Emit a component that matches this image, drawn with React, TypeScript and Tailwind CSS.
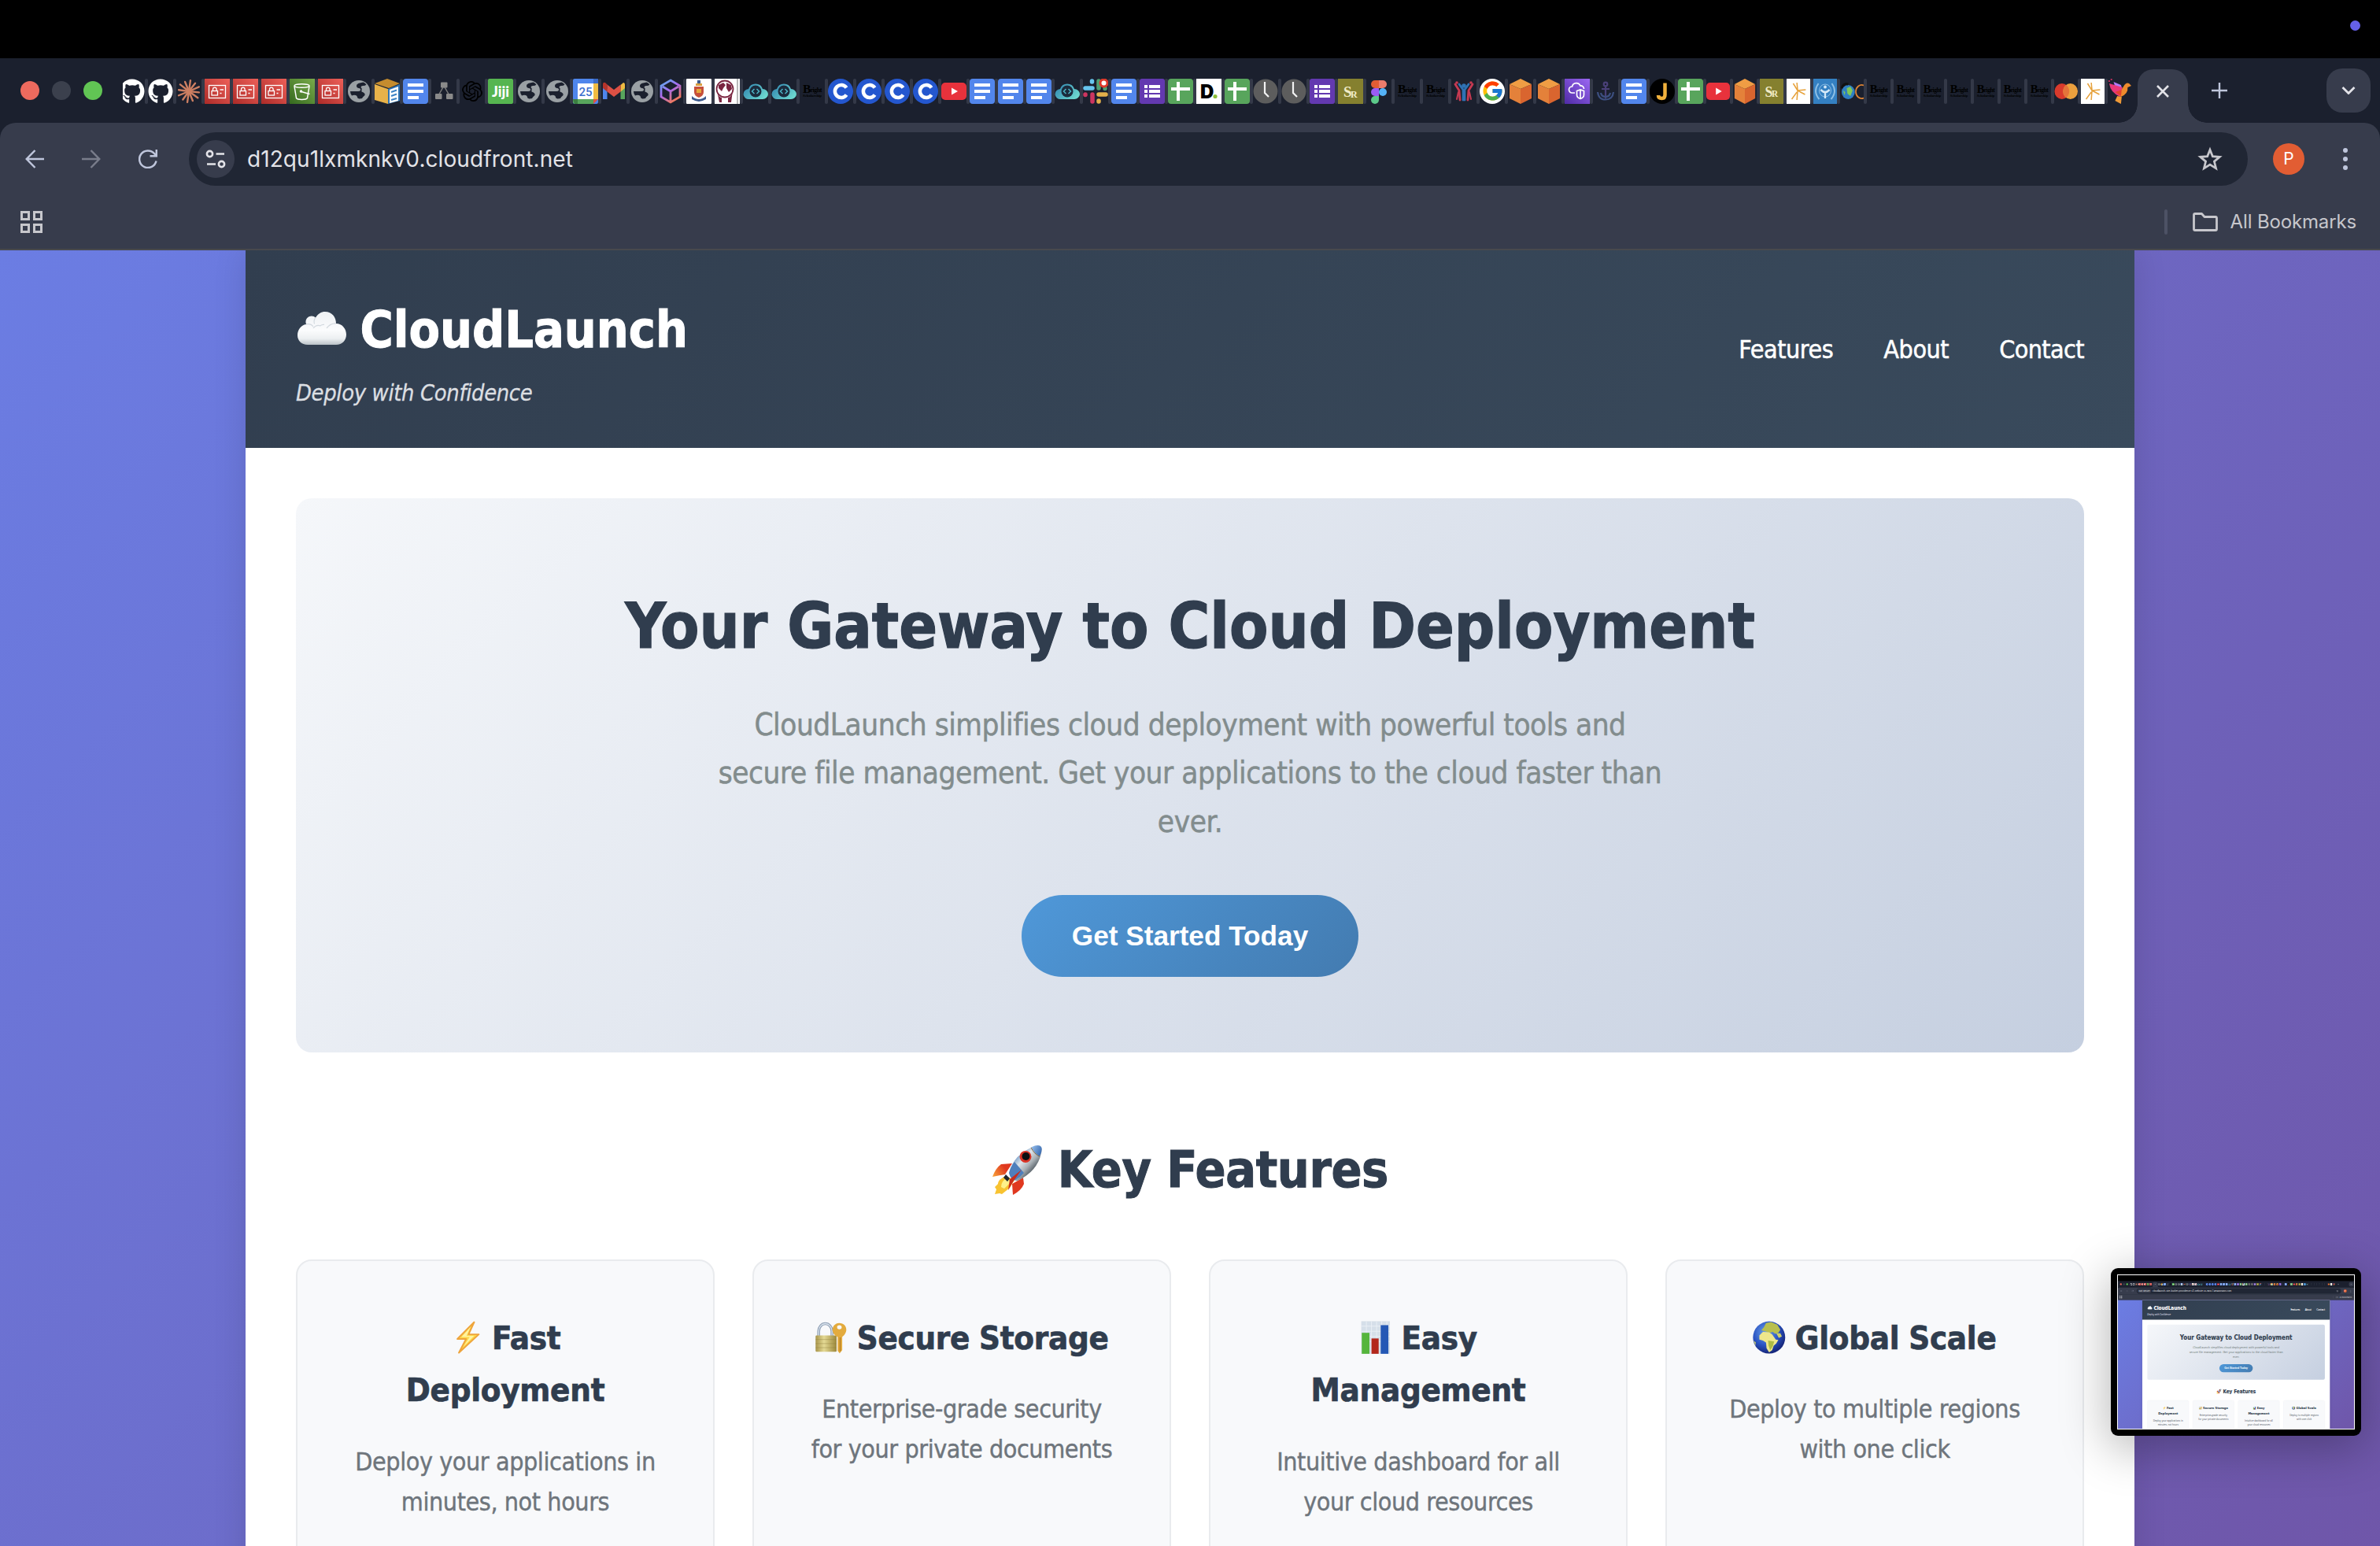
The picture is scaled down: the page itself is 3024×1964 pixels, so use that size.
import type { ReactNode } from 'react'
import { FaGithub } from 'react-icons/fa'
import { FcGoogle } from 'react-icons/fc'
import { SiOpenai } from 'react-icons/si'

/* ---------- favicons (32 x 32 drawings) ---------- */

const Fav = ({ children }: { children?: ReactNode }) => (
  <svg viewBox="0 0 32 32" preserveAspectRatio="none" className="block h-8 w-full">
    {children}
  </svg>
)

const Blank = () => <Fav />
const GitHub = () => <FaGithub className="block h-8 w-8 shrink-0 text-white" />
const Google = () => (
  <div className="flex h-8 w-8 items-center justify-center rounded-full bg-white">
    <FcGoogle className="h-[29px] w-[29px]" />
  </div>
)
const OpenAI = () => <SiOpenai className="block h-8 w-8 p-[3px] text-black" />

const rays = [0, 30, 58, 88, 118, 150, 180, 208, 240, 270, 300, 330]
const Claude = () => (
  <Fav>
    <g stroke="#cd7f62" strokeWidth="2.4" strokeLinecap="round">
      {rays.map((a, i) => (
        <line key={a} x1="16" y1="16" x2="16" y2={i % 2 ? 3 : 2} transform={`rotate(${a + 8} 16 16)`} />
      ))}
    </g>
  </Fav>
)

const RedId = () => (
  <Fav>
    <defs>
      <linearGradient id="redId" x1="0" y1="1" x2="1" y2="0">
        <stop offset="0" stopColor="#ac2b28" />
        <stop offset="1" stopColor="#ed5f58" />
      </linearGradient>
    </defs>
    <rect width="32" height="32" fill="url(#redId)" />
    <g fill="none" stroke="#fff" strokeWidth="1.3">
      <rect x="5.5" y="8.5" width="21" height="16" />
      <rect x="9" y="15.5" width="7.5" height="5.5" />
      <path d="M10.5 15.500V13.500a2.300 2.300 0 0 1 4.600 0V15.500M19.500 14h4.500M19.500 18.500h2" />
    </g>
  </Fav>
)

const Bucket = () => (
  <Fav>
    <defs>
      <linearGradient id="bucket" x1="0" y1="1" x2="1" y2="0">
        <stop offset="0" stopColor="#35691f" />
        <stop offset="1" stopColor="#79ab4a" />
      </linearGradient>
    </defs>
    <rect width="32" height="32" fill="url(#bucket)" />
    <g fill="none" stroke="#fff" strokeWidth="1.5">
      <ellipse cx="15.500" cy="9" rx="9.500" ry="2.300" />
      <path d="M6 9.500L8.500 24.500C10 27 21 27 22.500 24.500L25 9.500M15 16.500L25.500 19.500" />
      <circle cx="14.500" cy="16" r="1" />
    </g>
  </Fav>
)

const Globe = () => (
  <Fav>
    <circle cx="16" cy="16" r="14" fill="#9aa0a4" />
    <path d="M17 5.500q-4 1-4 3.500 0 2.500 3 3 2.500.5 2 2.500-.5 1.500-3 1.500H5q0 3 2 5.500 2-1 5-.5 2 .5 2 2.500 0 1.500 2.500 2l3.500-.5q1-2 2.500-3 2-1.500.5-3.500-1.500-1.500-3.500-2v-2.500q1-1.500-1-3 0-2 2.500-2 3 0 4.500-1.500-2-2.500-4-3-2 .5-4.500 1z" fill="#1b202e" />
  </Fav>
)

const AwsBox = () => (
  <Fav>
    <path d="M0 6L16 0l16 6-14 6z" fill="#c58c2e" />
    <path d="M0 7l17 6v19L0 27z" fill="#e8b24a" />
    <path d="M17 13l15-6v21l-15 4z" fill="#2f74b5" />
    <path d="M19 14l11-4v18l-11 3z" fill="#fff" />
    <path d="M21 17l7-2.500M21 22l7-2.500M21 27l7-2" stroke="#3b82c4" strokeWidth="2.200" />
  </Fav>
)

const Doc = () => (
  <Fav>
    <rect width="32" height="32" rx="4" fill="#5286ec" />
    <path d="M6 8h20M6 16h20M6 24h14" stroke="#fff" strokeWidth="4" />
  </Fav>
)

const Nodes = () => (
  <Fav>
    <path d="M16 9L8 23M16 9l8 14" stroke="#7d7d7d" strokeWidth="1.500" />
    <g fill="#8a8a8a">
      <rect x="12" y="4.500" width="8.500" height="7" rx="1" />
      <rect x="5" y="19" width="8.500" height="7" rx="1" />
      <rect x="19" y="19" width="8.500" height="7" rx="1" />
    </g>
  </Fav>
)

const Jiji = () => (
  <Fav>
    <rect width="32" height="32" rx="2" fill="#56b550" />
    <text x="16" y="22.500" textAnchor="middle" fontFamily="Lato" fontWeight="900" fontSize="18" fill="#fff" textLength="22" lengthAdjust="spacingAndGlyphs">Jiji</text>
  </Fav>
)

const Calendar = () => (
  <Fav>
    <rect width="32" height="32" rx="2" fill="#4f86ec" />
    <path d="M26 6h6v20h-6z" fill="#f0bc42" />
    <path d="M0 26h26v6H3q-3 0-3-3z" fill="#58a55c" />
    <path d="M26 0h6v6h-6z" fill="#3a6ac6" />
    <path d="M0 26h6v6H2z" fill="#3b7f42" />
    <path d="M26 26h6l-6 6z" fill="#e25142" />
    <rect x="6" y="6" width="20" height="20" fill="#fff" />
    <text x="16" y="21.500" textAnchor="middle" fontFamily="Roboto" fontWeight="500" fontSize="15" fill="#3c6fcf">25</text>
  </Fav>
)

const Gmail = () => (
  <Fav>
    <path d="M2 9v17h5.500V13z" fill="#4f86ec" />
    <path d="M30 9v17h-5.500V13z" fill="#58a55c" />
    <path d="M24.500 8L28 5q2 0 2 3v4l-5.500 4.500z" fill="#f0bc42" />
    <path d="M2 7q0-3 3-2l2.500 2.500v9L2 12z" fill="#b5342b" />
    <path d="M7.500 7.500L16 14l8.500-6.500v9L16 23l-8.500-6.500z" fill="#dc5044" />
  </Fav>
)

const HexCube = () => (
  <Fav>
    <defs>
      <linearGradient id="hex" x1="0" y1="0" x2="0.600" y2="1">
        <stop offset="0" stopColor="#55b7f0" />
        <stop offset="0.500" stopColor="#a66bf0" />
        <stop offset="1" stopColor="#f0795e" />
      </linearGradient>
    </defs>
    <path d="M16 2l12 7v14l-12 7-12-7V9zM16 16v13M16 16L6 10M16 16l10-6" fill="none" stroke="url(#hex)" strokeWidth="2.800" />
  </Fav>
)

const Crest = () => (
  <Fav>
    <rect width="32" height="32" rx="1" fill="#fff" />
    <path d="M14 2h4v6h-4z" fill="#3c5a8e" />
    <path d="M12 6h8v3h-8z" fill="#d9a040" />
    <path d="M10 10h12v7q0 5-6 7-6-2-6-7z" fill="#c6503b" />
    <path d="M13 13h6v5h-6z" fill="#e5a83c" />
    <path d="M7 22q4 4 9 4t9-4v4q-5 3-9 3t-9-3z" fill="#3c5a8e" />
  </Fav>
)

const MaroonGlobe = () => (
  <Fav>
    <rect width="32" height="32" fill="#fff" />
    <circle cx="13" cy="13" r="10.500" fill="none" stroke="#7a2540" strokeWidth="1.800" />
    <path d="M5 8l6-3 3 3-3 4-2 4-4-4zM15 5l6 3 1 5-4 4-3-5zM3 15q2 9 6 9v6H6zM23 15q-2 9-6 9v6h4z" fill="#7a2540" />
    <path d="M28.500 0h1v32h-1z" fill="#777" />
  </Fav>
)

const CloudCode = () => (
  <Fav>
    <defs>
      <linearGradient id="cloudCode" x1="0" y1="0" x2="1" y2="0.600">
        <stop offset="0" stopColor="#2c7fae" />
        <stop offset="1" stopColor="#6bd6cf" />
      </linearGradient>
    </defs>
    <path d="M8 26a7 6.500 0 0 1-1-13 9.500 9.500 0 0 1 18 0A7 6.500 0 0 1 25 26z" fill="url(#cloudCode)" />
    <circle cx="16" cy="16" r="7.500" fill="#1b2a3c" />
    <path d="M14.500 13L11.500 16l3 3M17.500 13l3 3-3 3" fill="none" stroke="#4cb3c4" strokeWidth="1.500" />
  </Fav>
)

const Bright = () => (
  <Fav>
    <g fill="#000" fontFamily="Liberation Serif" fontWeight="700">
      <text x="4" y="18" fontSize="15.500">B</text>
      <text x="13.500" y="17" fontSize="8" textLength="15">right</text>
      <text x="4" y="23.300" fontSize="5" textLength="24" lengthAdjust="spacingAndGlyphs">Scholarship</text>
    </g>
  </Fav>
)

const CircleC = () => (
  <Fav>
    <circle cx="16" cy="16" r="16" fill="#2457cf" />
    <path d="M23.500 11.500A8 8 0 1 0 23.500 20.500" fill="none" stroke="#fff" strokeWidth="4.500" />
  </Fav>
)

const YouTube = () => (
  <Fav>
    <rect y="5" width="32" height="22" rx="5" fill="#e8323c" />
    <path d="M13 11.500v9l8-4.500z" fill="#fff" />
  </Fav>
)

const Slack = () => (
  <Fav>
    <g strokeWidth="5.500" strokeLinecap="round">
      <path d="M3 12h9" stroke="#67c5ee" />
      <path d="M11.500 3v1" stroke="#67c5ee" />
      <path d="M20 3v9M28 12v.5" stroke="#4f9f72" />
      <path d="M20 20h9M20 28v1" stroke="#e3b04b" />
      <path d="M12 20v9M3 20v.5" stroke="#cd3560" />
    </g>
    <circle cx="26.500" cy="5.500" r="6" fill="#dd3a2b" />
    <circle cx="26.500" cy="5.500" r="3" fill="#fff" />
  </Fav>
)

const Forms = () => (
  <Fav>
    <rect width="32" height="32" rx="3" fill="#6339b0" />
    <path d="M6 10h4M12 10h14M6 16h4M12 16h14M6 22h4M12 22h14" stroke="#fff" strokeWidth="4" />
  </Fav>
)

const Sheet = () => (
  <Fav>
    <rect width="32" height="32" rx="4" fill="#58a55c" />
    <path d="M13 4v24M4 13h24" stroke="#fff" strokeWidth="4" />
  </Fav>
)

const LetterD = () => (
  <Fav>
    <rect width="32" height="32" fill="#fff" />
    <text x="5" y="25" fontFamily="Inter" fontWeight="900" fontSize="24" fill="#000">D</text>
    <circle cx="24" cy="22.500" r="2.600" fill="#8bbf3a" />
  </Fav>
)

const Clock = () => (
  <Fav>
    <circle cx="16" cy="16" r="15.500" fill="#5d5d5d" />
    <path d="M15 4v14l5 5" fill="none" stroke="#f2f2f2" strokeWidth="2.200" />
  </Fav>
)

const Sr = () => (
  <Fav>
    <rect width="32" height="32" fill="#85802f" />
    <text x="7" y="23" fontFamily="Liberation Serif" fontWeight="700" fontSize="19" fill="#f1ecc8">S</text>
    <text x="16" y="23.500" fontFamily="Liberation Serif" fontWeight="700" fontSize="12" fill="#f1ecc8">R</text>
  </Fav>
)

const Figma = () => (
  <Fav>
    <path d="M16 2H11a5 5 0 0 0 0 10h5z" fill="#e25d33" />
    <path d="M16 2h5a5 5 0 0 1 0 10h-5z" fill="#ec7c6c" />
    <path d="M16 12H11a5 5 0 0 0 0 10h5z" fill="#9a5cf5" />
    <circle cx="21" cy="17" r="5" fill="#54b2f7" />
    <path d="M16 22H11a5 5 0 1 0 5 5z" fill="#5cc98a" />
  </Fav>
)

const People = () => (
  <Fav>
    <g fill="none" strokeLinecap="round">
      <path d="M5 7l5 8 1 12M27 7l-5 8-1 12" stroke="#c83a52" strokeWidth="2.800" />
      <path d="M9 17l-2 9M23 17l2 9" stroke="#c83a52" strokeWidth="2" />
      <path d="M10 7l5 7v13M22 7l-5 7v13" stroke="#2f72b4" strokeWidth="2.800" />
    </g>
    <circle cx="16" cy="9" r="2.800" fill="#2f72b4" />
    <circle cx="7" cy="5" r="1.800" fill="#c83a52" />
    <circle cx="25" cy="5" r="1.800" fill="#c83a52" />
  </Fav>
)

const OrangeCube = () => (
  <Fav>
    <path d="M16 0l14 7-14 6L2 7z" fill="#ef9d44" />
    <path d="M2 7l14 6v19L2 25z" fill="#e4813a" />
    <path d="M30 7l-14 6v19l14-7z" fill="#d9652f" />
  </Fav>
)

const Vpc = () => (
  <Fav>
    <defs>
      <linearGradient id="vpc" x1="0" y1="1" x2="1" y2="0">
        <stop offset="0" stopColor="#4f2ba6" />
        <stop offset="1" stopColor="#9b67f2" />
      </linearGradient>
    </defs>
    <rect width="32" height="32" fill="url(#vpc)" />
    <g fill="none" stroke="#fff" strokeWidth="1.700">
      <path d="M13 18H9.500a4 4 0 0 1 0-8 5.500 5.500 0 0 1 10.500-1 4 4 0 0 1 4.500 4" />
      <path d="M15.500 15.500l4.500-1.500 4.500 1.500v5q0 3.500-4.500 5-4.500-1.500-4.500-5zM20 14v11" />
    </g>
  </Fav>
)

const Anchor = () => (
  <Fav>
    <g fill="none" stroke="#4a4078" strokeWidth="2.200">
      <circle cx="16" cy="7" r="2.300" />
      <path d="M16 9.500v16M11 13h10" />
      <path d="M6 17q1 9.500 10 9.500t10-9.500M10 18q1 5 6 5t6-5" stroke="#3c4f80" />
    </g>
  </Fav>
)

const LetterJ = () => (
  <Fav>
    <circle cx="16" cy="16" r="16" fill="#000" />
    <path d="M19.500 5.500v15q0 4.500-4 4.500-4.500 0-4.500-4" fill="none" stroke="#f0b03c" strokeWidth="4.500" />
  </Fav>
)

const Spark = () => (
  <Fav>
    <rect width="32" height="32" fill="#fff" />
    <path d="M15 15L9 6M15 15L14 5M15 15l11-1M15 15l10 5M15 15l-1 12M14 17l-7 9" fill="none" stroke="#e6a13a" strokeWidth="1.600" />
  </Fav>
)

const Emblem = () => (
  <Fav>
    <rect width="32" height="32" fill="#3480c2" />
    <g fill="none" stroke="#8fc0e6">
      <path d="M7 6Q-1 16 8 26M25 6q8 10-1 20" strokeWidth="2" />
      <circle cx="16" cy="15" r="8" strokeWidth="1" />
      <path d="M10 14q6 6 12 0M16 17v8" stroke="#d4e8f7" strokeWidth="2.500" />
    </g>
    <circle cx="16" cy="10.500" r="2" fill="#cfe6f7" />
  </Fav>
)

const EarthC = () => (
  <Fav>
    <circle cx="11" cy="17" r="9" fill="#2f7fc4" />
    <path d="M9 12l5-2 3 5-3 7-4-3zM4 15l3 2-1 4z" fill="#7fc85b" />
    <path d="M2 12Q5 5 11 7" stroke="#111" strokeWidth="3" fill="none" />
    <path d="M32 8.500a8 8.500 0 1 0 0 16" fill="none" stroke="#dd8434" strokeWidth="1.800" />
  </Fav>
)

const MasterCard = () => (
  <Fav>
    <circle cx="10.500" cy="16" r="10" fill="#d93a2c" />
    <circle cx="22" cy="16" r="10" fill="#eba03e" />
    <path d="M16.200 7.800a10 10 0 0 1 0 16.400 10 10 0 0 1 0-16.400z" fill="#e5743a" />
  </Fav>
)

const Bird = () => (
  <Fav>
    <path d="M8 4l10 4 2 6-10-4z" fill="#b07bf5" />
    <path d="M2 6l18 5-3 12Q4 18 2 6z" fill="#e8397a" />
    <path d="M15 20L22 9q3-5 7-3l3 3-5 2q1 8-9 12z" fill="#ee8b2d" />
    <path d="M10 17l9-3-1 8z" fill="#e2432f" />
    <path d="M13 22l6 1-1 9-8-4z" fill="#ef9a37" />
    <path d="M1 2h2v2H1zM4 0h2v2H4z" fill="#c22f5e" />
  </Fav>
)

const leadingTabs = [GitHub, Claude, RedId, RedId, RedId, Bucket, RedId]
const middleTabs = [
  Globe, AwsBox, Doc, Nodes, OpenAI, Jiji, Globe, Globe, Calendar, Gmail, Globe, HexCube, Crest,
  MaroonGlobe, CloudCode, CloudCode, Bright, CircleC, CircleC, CircleC, CircleC, YouTube, Doc, Doc,
  Doc, CloudCode, Slack, Doc, Forms, Sheet, LetterD, Sheet, Clock, Clock, Forms, Sr, Figma, Bright,
  Bright, People, Google, OrangeCube, OrangeCube, Vpc, Anchor, Doc, LetterJ, Sheet,
]
const narrowTabs = [
  YouTube, OrangeCube, Sr, Spark, Emblem, EarthC, Bright, Bright, Bright, Bright, Bright, Bright,
  Bright, MasterCard, Spark, Bird,
]

/* ---------- browser window ---------- */

const Separator = () => <div className="h-8 w-1 shrink-0 rounded-sm bg-[#343948]" />

const Tab = ({ icon: Icon, narrow = false }: { icon: () => ReactNode; narrow?: boolean }) => (
  <div className="flex shrink-0">
    <Separator />
    <div className={narrow ? 'w-[30px] overflow-hidden' : 'w-8'}>
      <Icon />
    </div>
  </div>
)

const ActiveTab = () => (
  <div className="relative ml-2 flex h-[68px] w-16 shrink-0 items-center justify-center self-end rounded-t-[20px] bg-[#373c4c] pb-3">
    <div className="absolute bottom-0 -left-6 h-6 w-6 bg-[radial-gradient(circle_at_0_0,transparent_23.5px,#373c4c_24px)]" />
    <div className="absolute -right-6 bottom-0 h-6 w-6 bg-[radial-gradient(circle_at_100%_0,transparent_23.5px,#373c4c_24px)]" />
    <svg viewBox="0 0 16 16" className="h-4 w-4" stroke="#e3e3e8" strokeWidth="2.600">
      <path d="M1 1l14 14M15 1L1 15" />
    </svg>
  </div>
)

const TabStrip = ({ mini }: { mini: boolean }) => (
  <div className="flex h-[82px] shrink-0 items-center bg-[#1b202e]">
    <div className="flex shrink-0 gap-4 pl-[26px]">
      <div className="h-6 w-6 rounded-full bg-[#ed6a5e]" />
      <div className="h-6 w-6 rounded-full bg-[#3b404d]" />
      <div className="h-6 w-6 rounded-full bg-[#61c554]" />
    </div>
    <div className="ml-[26px] flex h-full items-center pt-px">
      <div className="flex w-7 justify-end overflow-hidden">
        <GitHub />
      </div>
      {leadingTabs.map((icon, i) => (
        <Tab key={i} icon={icon} />
      ))}
      {mini && <ActiveTab />}
      {middleTabs.map((icon, i) => (
        <Tab key={i} icon={mini && icon === Bright ? Blank : icon} />
      ))}
      {narrowTabs.map((icon, i) => (
        <Tab key={i} icon={mini && icon === Bright ? Blank : icon} narrow />
      ))}
      {!mini && <ActiveTab />}
    </div>
    <svg viewBox="0 0 20 20" className="ml-[30px] h-5 w-5 shrink-0" stroke="#bfc6dc" strokeWidth="2.400">
      <path d="M10 0v20M0 10h20" />
    </svg>
    <div className="mr-3 ml-auto flex h-14 w-14 shrink-0 items-center justify-center rounded-[20px] bg-[#373c4c]">
      <svg viewBox="0 0 18 10" className="h-[10px] w-[18px]" fill="none" stroke="#e3e3e8" strokeWidth="2.800">
        <path d="M1.500 1L9 8.500 16.500 1" />
      </svg>
    </div>
  </div>
)

const Toolbar = ({ mini }: { mini: boolean }) => (
  <div className="shrink-0 bg-[#1b202e]">
    <div className="flex h-[92px] items-center rounded-t-[20px] bg-[#373c4c] pl-8">
      <svg viewBox="0 0 24 24" className="h-6 w-6" fill="none" stroke="#bfc6dc" strokeWidth="2.500">
        <path d="M12.500 1L1.800 12l10.700 11M2 12h22" />
      </svg>
      <svg viewBox="0 0 24 24" className="ml-12 h-6 w-6" fill="none" stroke="#797d8b" strokeWidth="2.500">
        <path d="M11.500 1l10.700 11-10.700 11M22 12H0" />
      </svg>
      <svg viewBox="0 0 24 24" className="ml-12 h-6 w-6" fill="none" stroke="#bfc6dc" strokeWidth="2.500">
        <path d="M22.500 14.500A10.800 10.800 0 1 1 20 5l2 2.500M22.800 0v8.300H14.500" />
      </svg>
      <div className="ml-10 flex h-[68px] w-[2616px] items-center rounded-full bg-[#202634] pr-8 pl-[10px]">
        {mini ? (
          <div className="flex h-12 items-center rounded-full bg-[#373c4c] px-5 font-['Inter'] text-[26px] text-[#e3e3e8]">Not Secure</div>
        ) : (
          <div className="flex h-12 w-12 items-center justify-center rounded-full bg-[#373c4c]">
            <svg viewBox="0 0 26 26" className="h-[26px] w-[26px]" fill="none" stroke="#e3e3e8" strokeWidth="2.600">
              <circle cx="5.500" cy="6.500" r="3.600" />
              <circle cx="20.500" cy="19.500" r="3.600" />
              <path d="M13.500 6.500H24M2 19.500h11" />
            </svg>
          </div>
        )}
        <div className="ml-4 font-['Inter'] text-[28px] leading-none tracking-[0.08px] text-[#e3e3e8]">
          {mini ? 'cloudlaunch-site-bucket-providence.s3-website.us-east-1.amazonaws.com' : 'd12qu1lxmknkv0.cloudfront.net'}
        </div>
        <svg viewBox="0 0 32 32" className="ml-auto h-8 w-8" fill="none" stroke="#c7c7cc" strokeWidth="2.700">
          <path d="M16 4.200l3.300 8.400 9 .7-6.900 5.800 2.200 8.800L16 23.100l-7.600 4.800 2.200-8.800-6.900-5.800 9-.7z" />
        </svg>
      </div>
      <div className="ml-8 flex h-10 w-10 items-center justify-center rounded-full bg-[#e25d33] font-['Inter'] text-[21px] text-white">P</div>
      <div className="ml-[49px] flex flex-col gap-[5px]">
        <div className="h-1.5 w-1.5 rounded-full bg-[#bfc6dc]" />
        <div className="h-1.5 w-1.5 rounded-full bg-[#bfc6dc]" />
        <div className="h-1.5 w-1.5 rounded-full bg-[#bfc6dc]" />
      </div>
    </div>
    <div className="flex h-[70px] items-center border-b-2 border-[#48494d] bg-[#373c4c] pr-[30px] pl-[26px]">
      <div className="grid grid-cols-2 gap-1">
        <div className="h-3 w-3 border-[3px] border-[#c7c7cc]" />
        <div className="h-3 w-3 border-[3px] border-[#c7c7cc]" />
        <div className="h-3 w-3 border-[3px] border-[#c7c7cc]" />
        <div className="h-3 w-3 border-[3px] border-[#c7c7cc]" />
      </div>
      <div className="ml-auto h-8 w-1 rounded-full bg-[#4d5265]" />
      <svg viewBox="0 0 32 24" className="ml-8 h-6 w-8" fill="none" stroke="#c7c7cc" strokeWidth="2.800" strokeLinejoin="round">
        <path d="M1.500 3q0-1.500 1.500-1.500h8.500L15 5.500h14q1.500 0 1.500 1.500v14q0 1.500-1.500 1.500H3q-1.500 0-1.500-1.500z" />
      </svg>
      <div className="ml-4 font-['Inter'] text-[24px] leading-none tracking-[-0.15px] text-[#c7c7cc]">All Bookmarks</div>
    </div>
  </div>
)

/* ---------- emoji drawings ---------- */

const Emoji = ({ label, children }: { label: string; children: ReactNode }) => (
  <svg viewBox="0 0 64 64" role="img" aria-label={label} className="inline-block h-[1em] w-[1em] align-[-0.15em]">
    {children}
  </svg>
)

const CloudEmoji = () => (
  <Emoji label="cloud">
    <defs>
      <linearGradient id="cloudFill" x1="0" y1="9" x2="0" y2="52" gradientUnits="userSpaceOnUse">
        <stop offset="0" stopColor="#eef1f4" />
        <stop offset="0.550" stopColor="#fbfcfd" />
        <stop offset="0.800" stopColor="#eceff1" />
        <stop offset="1" stopColor="#b4bcc2" />
      </linearGradient>
    </defs>
    <path d="M15 51C7 51 2 45.500 2 39S6 26 13 25C11 19 15 14.500 20 14.500q3 0 5 2c3-5 7-7.500 12-7.500 9 0 14 7 14 15 8 0 13 7 13 14 0 7-5 13-13 13z" fill="url(#cloudFill)" />
    <g fill="none" stroke="#d3d9df" strokeWidth="1.200">
      <path d="M25 16.500q-3 4-1.500 8" />
      <path d="M13 25q6-1 9 3M51 24q-7-.5-12 6" />
      <path d="M22 30q4-5 9-3 2-2 5-1.500" />
    </g>
  </Emoji>
)

const RocketEmoji = () => (
  <Emoji label="rocket">
    <defs>
      <linearGradient id="hull" x1="26" y1="18" x2="50" y2="40" gradientUnits="userSpaceOnUse">
        <stop offset="0" stopColor="#5f8fc4" />
        <stop offset="0.350" stopColor="#dfe5ea" />
        <stop offset="0.650" stopColor="#a9b0b5" />
        <stop offset="1" stopColor="#3c464e" />
      </linearGradient>
      <linearGradient id="nose" x1="50" y1="2" x2="66" y2="10" gradientUnits="userSpaceOnUse">
        <stop offset="0" stopColor="#9cc4ef" />
        <stop offset="1" stopColor="#2b5ea8" />
      </linearGradient>
      <linearGradient id="fin" x1="24" y1="26" x2="2" y2="42" gradientUnits="userSpaceOnUse">
        <stop offset="0.300" stopColor="#e0381f" />
        <stop offset="1" stopColor="#f9a63a" />
      </linearGradient>
    </defs>
    <path d="M26 24L12 25Q5 30 1 41l16-3z" fill="url(#fin)" />
    <path d="M40 42l1 8Q38 58 27 64l-1-14z" fill="#e0381f" />
    <path d="M18 40Q8 44 8 50L4 54l2 3-2 6 6-1 3 1 10-8 6-10z" fill="#f8c331" />
    <path d="M20 42q-8 4-8 12l4 2 8-8z" fill="#fdf08a" />
    <path d="M22 36Q28 12 55 2q11-3 8 9Q58 34 33 46q-8 1-11-10z" fill="url(#hull)" />
    <path d="M22 36q2-8 7-14l12 14q-5 6-11 9-6 0-8-9z" fill="#4f7fbc" />
    <path d="M50 3.500Q60-1 63 3q2 4-2 12-6-3-11-11.500z" fill="url(#nose)" />
    <path d="M50 4q4 8 11 11.500" fill="none" stroke="#8c6d45" strokeWidth="1" />
    <circle cx="43" cy="15.500" r="7.500" fill="#d93325" />
    <circle cx="43.500" cy="15" r="5" fill="#0c0f12" />
    <path d="M38 32l-10 14-7 12 2-14z" fill="#c92c1b" />
    <path d="M18 38l5 5-3 4-5-5z" fill="#20262c" />
  </Emoji>
)

const BoltEmoji = () => (
  <Emoji label="high voltage">
    <path d="M47 2L14 35h17L17 62 56 26H36z" fill="#fdd648" stroke="#eea43c" strokeWidth="3" strokeLinejoin="round" />
    <path d="M40 11L22 31h16L26 50 47 29H32z" fill="#fff3a0" />
  </Emoji>
)

const LockEmoji = () => (
  <Emoji label="locked with key">
    <defs>
      <linearGradient id="lockBody" x1="0" y1="0" x2="1" y2="0">
        <stop offset="0" stopColor="#a8954a" />
        <stop offset="0.400" stopColor="#e4d994" />
        <stop offset="1" stopColor="#9b873a" />
      </linearGradient>
    </defs>
    <path d="M8 30V20a13 15 0 0 1 26 0v10" fill="none" stroke="#8fa0b5" strokeWidth="5.500" />
    <path d="M8 30V20a13 15 0 0 1 26 0v10" fill="none" stroke="#dbe4ee" strokeWidth="2" />
    <rect x="2" y="28" width="41" height="32" rx="2" fill="url(#lockBody)" />
    <path d="M2 36h41M2 44h41M2 52h41" stroke="#8f8040" strokeWidth="1" opacity="0.600" />
    <path d="M48 4c9 0 14 6 14 13 0 6-4 11-8 14v26l-5 6-4-5V31c-6-3-10-8-10-14S40 4 48 4z" fill="#e3ab3e" />
    <ellipse cx="48.500" cy="12" rx="4.500" ry="4" fill="#f8f9fa" />
    <path d="M50 32v27" stroke="#b47c22" strokeWidth="2" />
  </Emoji>
)

const ChartEmoji = () => (
  <Emoji label="bar chart">
    <rect x="4" y="0" width="56" height="64" fill="#d5dfe9" />
    <path d="M4 10h56M4 20h56M4 30h56M4 40h56M14 0v64M24 0v64M34 0v64M44 0v64M54 0v64" stroke="#e9eff5" strokeWidth="1.500" />
    <rect x="5" y="23" width="15" height="41" fill="#55b53c" />
    <rect x="24" y="34" width="14" height="30" fill="#b3271c" />
    <rect x="42" y="8" width="15" height="56" fill="#2458b5" />
  </Emoji>
)

const EarthEmoji = () => (
  <Emoji label="globe">
    <defs>
      <radialGradient id="sea" cx="0.400" cy="0.350" r="0.650">
        <stop offset="0" stopColor="#6fa5e8" />
        <stop offset="0.600" stopColor="#2b55c4" />
        <stop offset="1" stopColor="#16277c" />
      </radialGradient>
    </defs>
    <circle cx="32" cy="32" r="31.500" fill="url(#sea)" />
    <path d="M17 18l5-6 4-8 10-2 12 5 6 10-4 6-6 2-5-4-6 2-8-3z" fill="#b8bf4e" />
    <path d="M13 28l7-7 12 1 6 4 7 10 5 1-4 7-5 4-3 9-6 4-5-8-1-11-6-4-7-2z" fill="#eee78b" />
    <path d="M30 38l12 2-3 10-5 7-3-9z" fill="#aebb45" />
    <path d="M46 24l8 0 3 6-6 3zM2 38l4 4-1 6z" fill="#cfd06a" />
  </Emoji>
)

/* ---------- site ---------- */

const cards = [
  { icon: <BoltEmoji />, title: ['Fast', 'Deployment'], text: ['Deploy your applications in', 'minutes, not hours'] },
  { icon: <LockEmoji />, title: ['Secure Storage'], text: ['Enterprise-grade security', 'for your private documents'] },
  { icon: <ChartEmoji />, title: ['Easy', 'Management'], text: ['Intuitive dashboard for all', 'your cloud resources'] },
  { icon: <EarthEmoji />, title: ['Global Scale'], text: ['Deploy to multiple regions', 'with one click'] },
]

const Site = () => (
  <div className="flex min-h-0 flex-1 justify-center overflow-hidden bg-[linear-gradient(135deg,#6b7de3_0%,#704e9d_100%)] bg-[length:100%_2640px] bg-no-repeat">
    <div className="h-[2400px] w-[2400px] bg-white font-['DejaVu_Sans_Condensed',sans-serif] shadow-[0_0_40px_rgba(0,0,0,0.12)]">
      <header className="flex h-[251px] items-center justify-between bg-[linear-gradient(135deg,#313e4f,#394a5c)] px-16 text-white">
        <div>
          <h1 className="translate-y-[0.03em] text-[64px] leading-[102.4px] font-bold whitespace-nowrap [-webkit-text-stroke:1px] [word-spacing:-2.5px]">
            <CloudEmoji /> CloudLaunch
          </h1>
          <p className="mt-[6.4px] translate-y-[0.03em] text-[28.8px] leading-[46px] tracking-[-0.34px] text-[#dcdfe2] italic [-webkit-text-stroke:0.3px]">Deploy with Confidence</p>
        </div>
        <nav className="flex translate-y-[1px] gap-16 text-[32px] leading-[51.2px] tracking-[-0.45px] [-webkit-text-stroke:0.5px]">
          <span>Features</span>
          <span>About</span>
          <span className="tracking-[-0.6px]">Contact</span>
        </nav>
      </header>
      <main className="p-16">
        <section className="flex flex-col items-center rounded-[20px] bg-[linear-gradient(135deg,#f5f7fa_0%,#c5cfe0_100%)] py-24 text-center">
          <h2 className="translate-y-[0.04em] text-[80px] leading-[128px] font-bold text-[#303d4e] [-webkit-text-stroke:1.2px]">Your Gateway to Cloud Deployment</h2>
          <p className="mt-8 translate-y-[0.02em] text-[38.4px] leading-[61.44px] tracking-[-0.46px] text-[#828c8d] [-webkit-text-stroke:0.5px]">
            CloudLaunch simplifies cloud deployment with powerful tools and
            <br />
            secure file management. Get your applications to the cloud faster than
            <br />
            ever.
          </p>
          <button className="mt-16 flex h-[104px] w-[428px] items-center justify-center rounded-full bg-[linear-gradient(135deg,#4f98d9,#437bb0)] font-['Liberation_Sans'] text-[35.2px] font-bold text-white">
            Get Started Today
          </button>
        </section>
        <section className="mt-24">
          <h2 className="translate-y-[0.03em] text-center text-[64px] leading-[102.4px] font-bold tracking-[-0.4px] text-[#303d4e] [-webkit-text-stroke:1px]">
            <RocketEmoji /> Key Features
          </h2>
          <div className="mt-16 grid grid-cols-4 gap-12">
            {cards.map((card) => (
              <article key={card.title.join()} className="h-[500px] rounded-[20px] border-2 border-[#e9ebee] bg-[#f8f9fb] pt-16 text-center">
                <h3 className="translate-y-[0.03em] text-[41.6px] leading-[66.56px] font-bold tracking-[-0.25px] text-[#303d4e] [-webkit-text-stroke:0.7px] [word-spacing:-1px]">
                  {card.icon} {card.title[0]}
                  {card.title[1] && <br />}
                  {card.title[1]}
                </h3>
                <p className="mt-8 translate-y-[0.04em] text-[32px] leading-[51.2px] tracking-[-0.43px] text-[#6e757c] [-webkit-text-stroke:0.4px]">
                  {card.text[0]}
                  <br />
                  {card.text[1]}
                </p>
              </article>
            ))}
          </div>
        </section>
      </main>
    </div>
  </div>
)

const Desktop = ({ mini = false }: { mini?: boolean }) => (
  <div className="flex h-[1964px] w-[3024px] flex-col overflow-hidden bg-black">
    <div className="flex h-[74px] shrink-0 items-center justify-end bg-black pr-[25px] pb-[10px]">
      {!mini && <div className="h-[13px] w-[13px] rounded-full bg-[#6560e9]" />}
    </div>
    <TabStrip mini={mini} />
    <Toolbar mini={mini} />
    <Site />
  </div>
)

export default function App() {
  return (
    <div className="relative h-[1964px] w-[3024px] overflow-hidden">
      <Desktop />
      <div className="absolute top-[1611px] left-[2682px] rounded-[9px] bg-black p-2 shadow-[0_12px_60px_4px_rgba(0,0,0,0.28)]">
        <div className="h-[197px] w-[302px] overflow-hidden border border-white">
          <div className="h-[1964px] w-[3024px] origin-top-left scale-[0.0993]">
            <Desktop mini />
          </div>
        </div>
      </div>
    </div>
  )
}
